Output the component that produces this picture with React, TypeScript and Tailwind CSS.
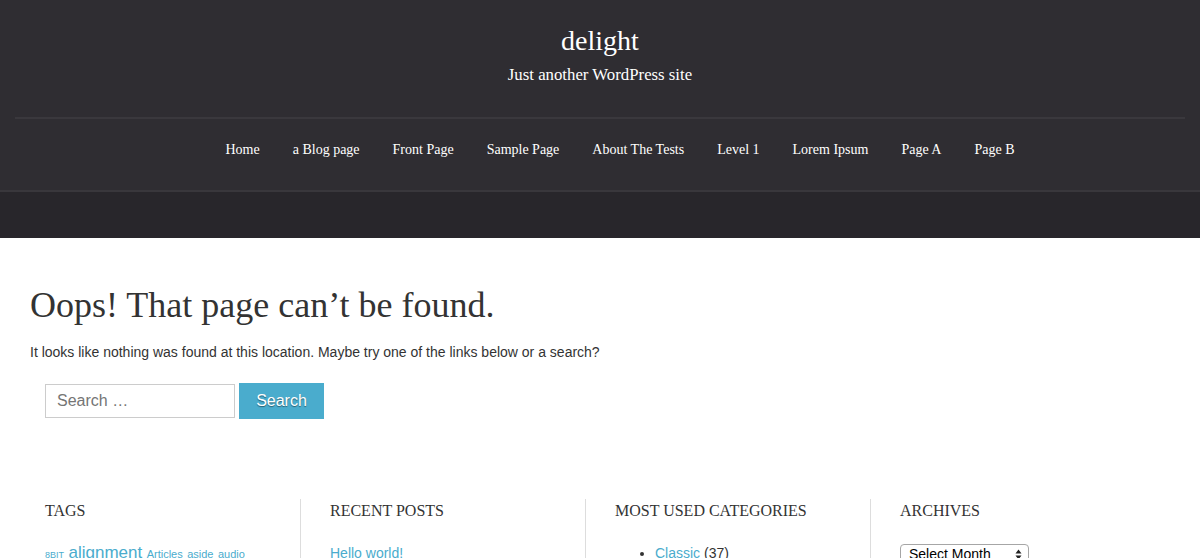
import React from "react";

const navItems = ["Home", "a Blog page", "Front Page", "Sample Page", "About The Tests", "Level 1", "Lorem Ipsum", "Page A", "Page B"];

const serif = "font-['Liberation_Serif','Times_New_Roman',serif]";
const sans = "font-['Liberation_Sans',Arial,sans-serif]";

const App = () => {
    return (
        <div className={`min-h-screen bg-white ${sans}`}>
            {/* Header */}
            <header className="bg-[#2f2d32] text-white">
                <div className={`h-[117px] flex flex-col items-center ${serif}`}>
                    <h1 className="mt-[24px] text-[28px] leading-[34px]">delight</h1>
                    <p className="mt-[7px] text-[16.8px] leading-[20px]">Just another WordPress site</p>
                </div>
                <div className="mx-[15px] h-[2px] bg-[#3a383d]"></div>
                <nav className={`h-[71px] pt-[21px] pl-[40px] flex justify-center gap-[33px] text-[14px] leading-[20px] ${serif}`}>
                    {navItems.map((item) => (
                        <a key={item} className="text-white">
                            {item}
                        </a>
                    ))}
                </nav>
                <div className="h-[2px] bg-[#39373c]"></div>
            </header>
            <div className="h-[46px] bg-[#28262b]"></div>

            {/* Not found */}
            <main className="px-[30px] pt-[46px] text-[#333]">
                <h2 className={`text-[36px] leading-[43px] ${serif}`}>Oops! That page can’t be found.</h2>
                <p className="mt-[15px] text-[14px] leading-[20px]">
                    It looks like nothing was found at this location. Maybe try one of the links below or a search?
                </p>
                <form className="mt-[21px] ml-[15px] flex items-start gap-[4px]" onSubmit={(e) => e.preventDefault()}>
                    <input
                        type="search"
                        placeholder="Search …"
                        className="mt-[1px] w-[190px] h-[34px] px-[11px] border border-[#ccc] text-[16px] text-[#333] placeholder-[#757575] outline-none"
                    />
                    <button className="w-[85px] h-[36px] bg-[#4aaccd] text-white text-[16px] [text-shadow:0_1px_1px_rgba(0,0,0,0.45)]">
                        Search
                    </button>
                </form>
            </main>

            {/* Widgets */}
            <section className="mt-[80px] pl-[15px] flex">
                <div className="w-[285px] pl-[30px]">
                    <h3 className={`text-[16px] leading-[24px] uppercase text-[#333] ${serif}`}>Tags</h3>
                    <div className="mt-[18px] text-[#4aaccd] leading-[24px]">
                        <a className="text-[9px] uppercase">8bit</a>{" "}
                        <a className="text-[17px]">alignment</a>{" "}
                        <a className="text-[11px]">Articles</a>{" "}
                        <a className="text-[11px]">aside</a>{" "}
                        <a className="text-[11px]">audio</a>
                    </div>
                </div>
                <div className="w-[285px] pl-[29px] border-l border-[#ddd]">
                    <h3 className={`text-[16px] leading-[24px] uppercase text-[#333] ${serif}`}>Recent Posts</h3>
                    <a className="mt-[18px] block text-[14px] leading-[24px] text-[#4aaccd]">Hello world!</a>
                </div>
                <div className="w-[285px] pl-[29px] border-l border-[#ddd]">
                    <h3 className={`text-[16px] leading-[24px] uppercase text-[#333] ${serif}`}>Most Used Categories</h3>
                    <ul className="mt-[18px] pl-[40px] list-disc text-[14px] leading-[24px] text-[#333]">
                        <li>
                            <a className="text-[#4aaccd]">Classic</a> (37)
                        </li>
                    </ul>
                </div>
                <div className="w-[285px] pl-[29px] border-l border-[#ddd] h-[80px]">
                    <h3 className={`text-[16px] leading-[24px] uppercase text-[#333] ${serif}`}>Archives</h3>
                    <div className="mt-[21px] w-[129px] h-[21px] flex items-center justify-between pl-[8px] pr-[6px] border border-[#a6a6a6] rounded-[4px] bg-white text-[14px] text-black">
                        <span>Select Month</span>
                        <svg width="7" height="11" viewBox="0 0 7 11">
                            <path d="M3.5 0.5 L6.5 4.5 L0.5 4.5 Z" fill="#222" />
                            <path d="M3.5 10.5 L6.5 6.5 L0.5 6.5 Z" fill="#222" />
                        </svg>
                    </div>
                </div>
            </section>
        </div>
    );
};

export default App;
